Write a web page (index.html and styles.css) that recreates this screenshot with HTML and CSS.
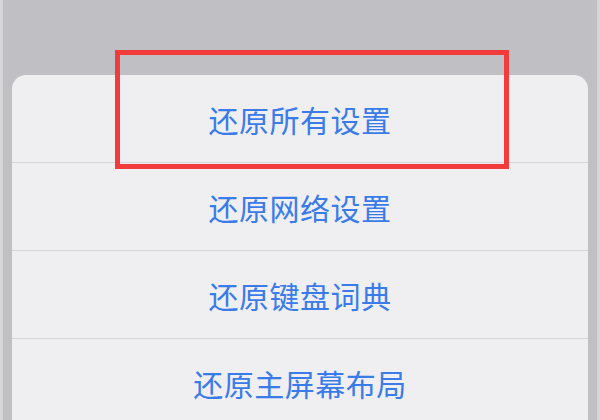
FILE: index.html
```html
<!DOCTYPE html>
<html lang="zh-CN">
<head>
<meta charset="utf-8">
<title>还原</title>
<link rel="stylesheet" href="styles.css">
</head>
<body>
<div class="screen">
  <div class="sheet">
    <div class="row">还原所有设置</div>
    <div class="row">还原网络设置</div>
    <div class="row">还原键盘词典</div>
    <div class="row">还原主屏幕布局</div>
  </div>
  <div class="highlight"></div>
</div>
</body>
</html>
```
FILE: styles.css
```css
html, body {
  margin: 0;
  padding: 0;
  width: 600px;
  height: 420px;
  overflow: hidden;
}
.screen {
  position: relative;
  box-sizing: border-box;
  width: 600px;
  height: 420px;
  overflow: hidden;
  background: #c0c0c4;
  border-left: 3px solid #d6d6d9;
  border-right: 3px solid #d6d6d9;
  padding: 75px 9px 0 9px;
  font-family: "Noto Sans CJK SC", "Noto Sans", sans-serif;
}
.sheet {
  background: #efeff1;
  border-radius: 14px 14px 0 0;
  height: 345px;
  overflow: hidden;
}
.row {
  height: 88px;
  box-sizing: border-box;
  display: flex;
  align-items: center;
  justify-content: center;
  font-size: 30px;
  color: #3a7bea;
  border-bottom: 1px solid #d5d5d9;
  letter-spacing: 0.5px;
}
.highlight {
  position: absolute;
  left: 112px;
  top: 50px;
  width: 394px;
  height: 119px;
  box-sizing: border-box;
  border: 5.5px solid #f23b3b;
}
```
